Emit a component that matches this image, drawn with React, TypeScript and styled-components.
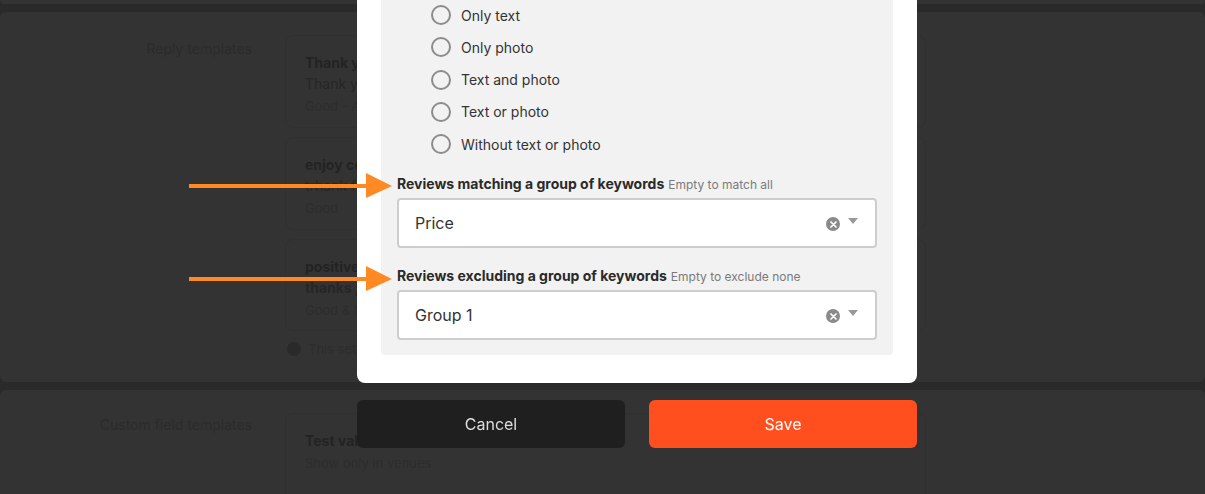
import React from "react";
import styled, { createGlobalStyle } from "styled-components";

const Global = createGlobalStyle`
  html, body { margin: 0; padding: 0; }
  body {
    background: #2a2a2a;
    font-family: Inter, "Noto Sans", sans-serif;
    overflow: hidden;
    width: 1205px;
    height: 494px;
  }
`;

const Page = styled.div`
  display: flex;
  flex-direction: column;
  gap: 8px;
  height: 494px;
  overflow: hidden;
`;

const Panel = styled.section<{ $h: number; $pt?: number }>`
  background: #333333;
  border-radius: 6px;
  height: ${(p) => p.$h}px;
  flex: none;
  box-sizing: border-box;
  padding-top: ${(p) => p.$pt ?? 0}px;
  display: grid;
  grid-template-columns: 252px 641px;
  column-gap: 33px;
  align-content: start;
`;

const Sliver = styled.div`
  background: #333333;
  height: 4px;
  flex: none;
  border-radius: 0 0 6px 6px;
`;

const SectionLabel = styled.div<{ $mt: number }>`
  text-align: right;
  font-size: 14px;
  color: #2b2b2b;
  margin-top: ${(p) => p.$mt}px;
  line-height: 18px;
`;

const Cards = styled.div`
  display: flex;
  flex-direction: column;
  gap: 9px;
`;

const Card = styled.div<{ $h: number }>`
  height: ${(p) => p.$h}px;
  box-sizing: border-box;
  border: 1px solid #303030;
  border-radius: 8px;
  padding: 18px 19px 0;
  display: flex;
  flex-direction: column;
`;

const CardTitle = styled.div`
  font-size: 14px;
  font-weight: 700;
  color: #232323;
  line-height: 18px;
`;

const CardBody = styled.div<{ $bold?: boolean }>`
  font-size: 14px;
  font-weight: ${(p) => (p.$bold ? 700 : 400)};
  color: #262626;
  line-height: 18px;
  margin-top: 3px;
`;

const CardMeta = styled.div`
  font-size: 13px;
  color: #2d2d2d;
  line-height: 18px;
  margin-top: 4px;
`;

const InfoLine = styled.div`
  display: flex;
  align-items: center;
  gap: 7px;
  margin-top: 1px;
  padding-left: 2px;
  font-size: 13px;
  color: #2d2d2d;
`;

const InfoDot = styled.span`
  width: 14px;
  height: 14px;
  border-radius: 50%;
  background: #2a2a2a;
`;

/* modal */
const ModalLayer = styled.div`
  position: fixed;
  left: 357px;
  top: -44px;
  width: 560px;
  display: flex;
  flex-direction: column;
  gap: 17px;
  z-index: 1;
`;

const Dialog = styled.div`
  background: #ffffff;
  border-radius: 8px;
  padding: 24px 24px 28px;
`;

const FilterBox = styled.div`
  background: #f2f2f2;
  border-radius: 4px;
  padding: 19px 16px 15px;
`;

const RadioList = styled.div`
  display: flex;
  flex-direction: column;
  padding-left: 34px;
`;

const RadioRow = styled.label`
  height: 32.25px;
  display: flex;
  align-items: center;
  gap: 10px;
  font-size: 14px;
  color: #333;
`;

const RadioCircle = styled.span`
  width: 20px;
  height: 20px;
  box-sizing: border-box;
  border: 2px solid #8c8c8c;
  border-radius: 50%;
  flex: none;
`;

const FieldLabel = styled.div<{ $mt: number }>`
  margin-top: ${(p) => p.$mt}px;
  height: 16px;
  line-height: 16px;
  font-size: 14px;
  font-weight: 700;
  color: #2a2a2a;
  display: flex;
  align-items: center;
  gap: 4px;
  white-space: nowrap;
`;

const Hint = styled.span`
  font-size: 12px;
  font-weight: 400;
  color: #7a7a7a;
  padding-top: 1px;
`;

const SelectBox = styled.div`
  margin-top: 6px;
  height: 50px;
  box-sizing: border-box;
  background: #fff;
  border: 2px solid #cdcdcd;
  border-radius: 4px;
  display: flex;
  align-items: center;
  padding: 0 17px 0 16px;
  font-size: 16px;
  color: #333;
`;

const SelectValue = styled.span`
  flex: 1;
`;

const ClearIcon = styled.span`
  width: 14px;
  height: 14px;
  border-radius: 50%;
  background: #8a8a8a;
  display: flex;
  align-items: center;
  justify-content: center;
  margin-top: 2px;
`;

const Caret = styled.span`
  width: 0;
  height: 0;
  border-left: 5.5px solid transparent;
  border-right: 5.5px solid transparent;
  border-top: 6px solid #999;
  margin-left: 8px;
  margin-top: -5px;
`;

const Footer = styled.div`
  display: flex;
  gap: 24px;
`;

const Button = styled.button<{ $primary?: boolean }>`
  flex: 1;
  height: 48px;
  border: none;
  border-radius: 6px;
  font-family: Inter, "Noto Sans", sans-serif;
  font-size: 16px;
  background: ${(p) => (p.$primary ? "#ff4f1f" : "#1f1f1f")};
  color: ${(p) => (p.$primary ? "#ffffff" : "#dddddd")};
`;

const Arrow = styled.svg<{ $top: number }>`
  position: fixed;
  left: 189px;
  top: ${(p) => p.$top}px;
  z-index: 2;
`;

const Field = ({ label, hint, value, mt }: { label: string; hint: string; value: string; mt: number }) => (
  <>
    <FieldLabel $mt={mt}>
      {label}
      <Hint>{hint}</Hint>
    </FieldLabel>
    <SelectBox>
      <SelectValue>{value}</SelectValue>
      <ClearIcon>
        <svg width="7" height="7" viewBox="0 0 7 7">
          <path d="M1 1L6 6M6 1L1 6" stroke="#fff" strokeWidth="1.7" strokeLinecap="round" />
        </svg>
      </ClearIcon>
      <Caret />
    </SelectBox>
  </>
);

const OrangeArrow = ({ top }: { top: number }) => (
  <Arrow $top={top} width="204" height="26" viewBox="0 0 204 26">
    <rect x="0" y="11" width="180" height="4" fill="#ff8a24" />
    <polygon points="177,0 203,13 177,25" fill="#ff8a24" />
  </Arrow>
);

export default function App() {
  const options = ["Only text", "Only photo", "Text and photo", "Text or photo", "Without text or photo"];
  return (
    <>
      <Global />
      <Page>
        <Sliver />
        <Panel $h={370} $pt={23}>
          <SectionLabel $mt={5}>Reply templates</SectionLabel>
          <Cards>
            <Card $h={93}>
              <CardTitle>Thank you for your review</CardTitle>
              <CardBody>Thank you for taking the time</CardBody>
              <CardMeta>Good - All venues</CardMeta>
            </Card>
            <Card $h={93}>
              <CardTitle>enjoy coming back</CardTitle>
              <CardBody>trhank for visiting</CardBody>
              <CardMeta>Good</CardMeta>
            </Card>
            <Card $h={92}>
              <CardTitle>positive review</CardTitle>
              <CardBody $bold>thanks ;)</CardBody>
              <CardMeta>Good &amp; Neutral</CardMeta>
            </Card>
            <InfoLine>
              <InfoDot />
              This setting applies to all venues
            </InfoLine>
          </Cards>
        </Panel>
        <Panel $h={120} $pt={23}>
          <SectionLabel $mt={3}>Custom field templates</SectionLabel>
          <Cards>
            <Card $h={90}>
              <CardTitle>Test value</CardTitle>
              <CardMeta>Show only in venues</CardMeta>
            </Card>
          </Cards>
        </Panel>
      </Page>

      <ModalLayer>
        <Dialog>
          <FilterBox>
            <RadioList>
              {options.map((o) => (
                <RadioRow key={o}>
                  <RadioCircle />
                  {o}
                </RadioRow>
              ))}
            </RadioList>
            <Field label="Reviews matching a group of keywords" hint="Empty to match all" value="Price" mt={16} />
            <Field label="Reviews excluding a group of keywords" hint="Empty to exclude none" value="Group 1" mt={20} />
          </FilterBox>
        </Dialog>
        <Footer>
          <Button>Cancel</Button>
          <Button $primary>Save</Button>
        </Footer>
      </ModalLayer>

      <OrangeArrow top={173} />
      <OrangeArrow top={266} />
    </>
  );
}
